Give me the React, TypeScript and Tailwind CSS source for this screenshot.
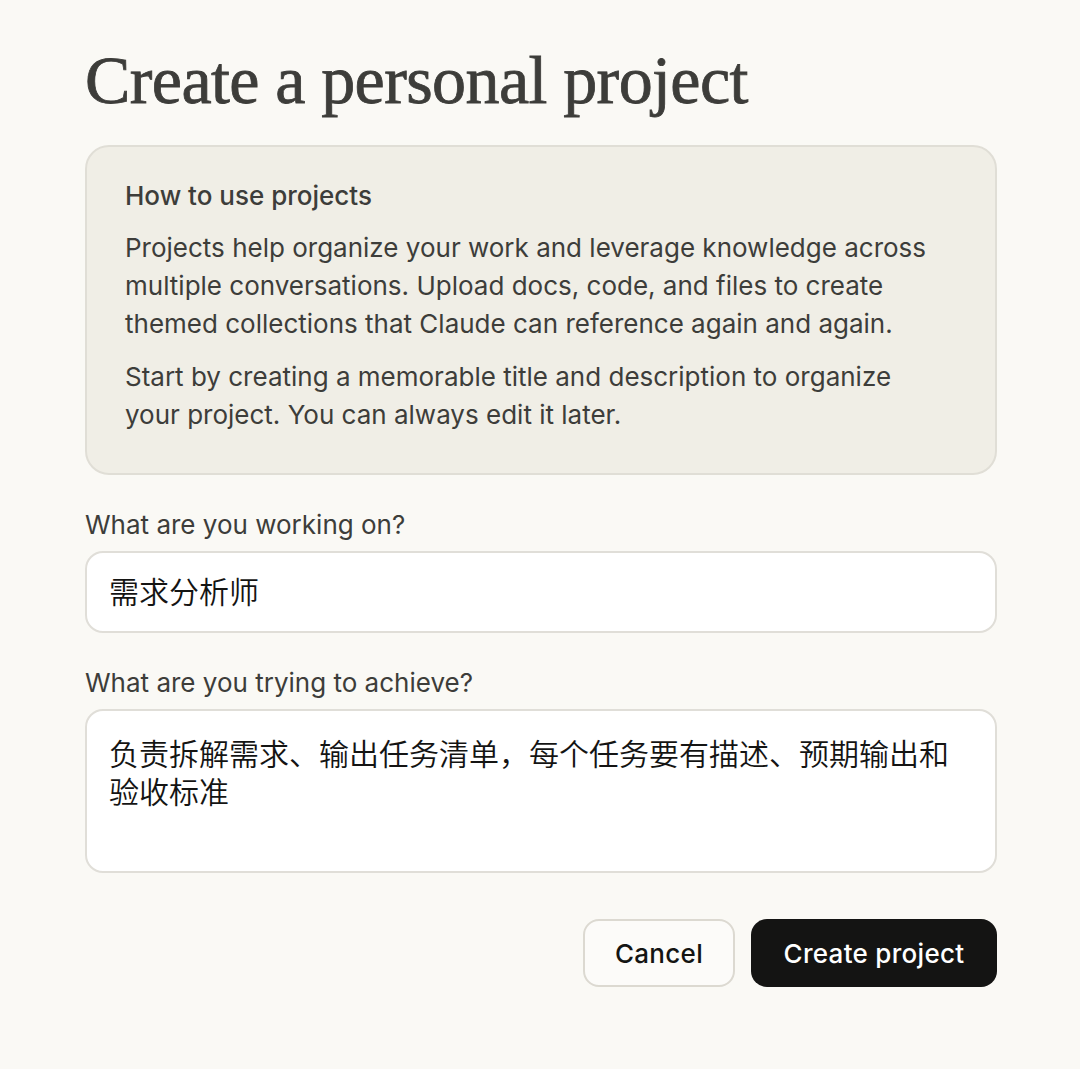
export default function App() {
  return (
    <main
      className="min-h-screen bg-[#faf9f5] pl-[85px] pr-[83px] pt-[42px] text-[#3d3d3a]"
      style={{ fontFamily: 'Inter, "Noto Sans CJK SC", sans-serif' }}
    >
      <h1
        className="text-[68px] leading-[76px] tracking-[-0.6px] text-[#3d3d3a] [-webkit-text-stroke:0.8px_#3d3d3a]"
        style={{ fontFamily: '"Liberation Serif", "DejaVu Serif", serif' }}
      >
        Create a personal project
      </h1>

      <section className="mt-[27px] rounded-[24px] border-2 border-[#e0ded6] bg-[#f0eee6] pb-[39px] pl-[38px] pr-[48px] pt-[31px]">
        <h2 className="text-[26px] font-medium leading-[36px]">How to use projects</h2>
        <p className="mt-[15px] text-[26px] leading-[38px]">
          Projects help organize your work and leverage knowledge across multiple conversations. Upload docs, code, and
          files to create themed collections that Claude can reference again and again.
        </p>
        <p className="mt-[15px] text-[26px] leading-[38px]">
          Start by creating a memorable title and description to organize your project. You can always edit it later.
        </p>
      </section>

      <label className="mt-[32px] block text-[26px] leading-[36px]">What are you working on?</label>
      <div className="mt-[8px] flex h-[82px] items-center rounded-[18px] border-2 border-[#e0ded8] bg-white px-[22px] text-[30px] font-[350] text-[#141413]">
        需求分析师
      </div>

      <label className="mt-[32px] block text-[26px] leading-[36px]">What are you trying to achieve?</label>
      <div className="mt-[8px] h-[164px] rounded-[18px] border-2 border-[#e0ded8] bg-white px-[22px] pt-[24px] text-[30px] font-[350] leading-[38px] text-[#141413]">
        负责拆解需求、输出任务清单，每个任务要有描述、预期输出和验收标准
      </div>

      <div className="mt-[46px] flex justify-end gap-[16px]">
        <button className="h-[68px] w-[152px] rounded-[16px] border-2 border-[#dcd9d1] bg-[#fcfbf9] text-[26px] font-medium tracking-[0.3px] text-[#141413]">
          Cancel
        </button>
        <button className="h-[68px] w-[246px] rounded-[16px] bg-[#141413] text-[26px] font-medium tracking-[0.3px] text-white">
          Create project
        </button>
      </div>
    </main>
  )
}
